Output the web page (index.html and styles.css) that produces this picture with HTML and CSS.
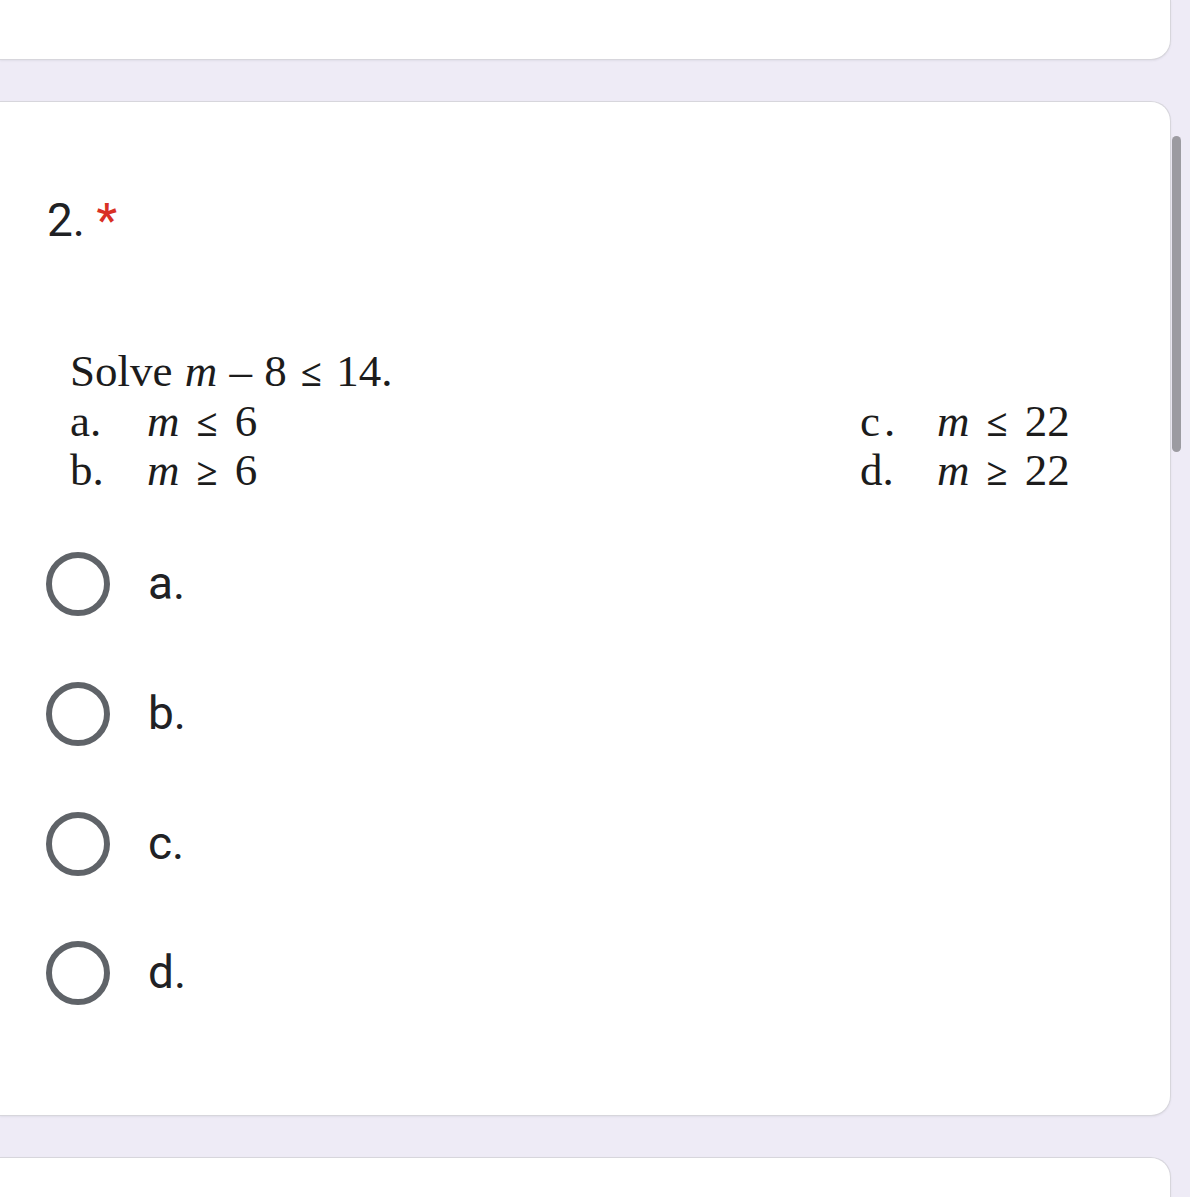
FILE: index.html
```html
<!DOCTYPE html>
<html lang="en">
<head>
<meta charset="utf-8">
<title>Question 2</title>
<link rel="stylesheet" href="styles.css">
</head>
<body>
<div class="page">
  <div class="card card-prev"></div>

  <div class="card card-question">
    <div class="q-title">2. <span class="req">*</span></div>

    <div class="q-image">
      <div class="q-stem">Solve <i>m</i> – 8 <span class="rel">≤</span> 14.</div>
      <div class="q-choices">
        <div class="ch"><span class="ch-l">a.</span><span class="ch-e"><i>m</i> <span class="rel">≤</span> 6</span></div>
        <div class="ch"><span class="ch-l ch-c">c.</span><span class="ch-e"><i>m</i> <span class="rel">≤</span> 22</span></div>
        <div class="ch"><span class="ch-l">b.</span><span class="ch-e"><i>m</i> <span class="rel">≥</span> 6</span></div>
        <div class="ch"><span class="ch-l">d.</span><span class="ch-e"><i>m</i> <span class="rel">≥</span> 22</span></div>
      </div>
    </div>

    <div class="options">
      <label class="opt"><span class="radio"></span><span class="opt-text">a.</span></label>
      <label class="opt"><span class="radio"></span><span class="opt-text">b.</span></label>
      <label class="opt"><span class="radio"></span><span class="opt-text">c.</span></label>
      <label class="opt"><span class="radio"></span><span class="opt-text">d.</span></label>
    </div>
  </div>

  <div class="card card-next"></div>
</div>
<div class="scrollbar"></div>
</body>
</html>
```

FILE: styles.css
```css
html, body {
  margin: 0;
  padding: 0;
  height: 100%;
  overflow: hidden;
}

body {
  background: #eeebf6;
  font-family: Roboto, "Liberation Sans", sans-serif;
  color: #202124;
}

.page {
  display: flex;
  flex-direction: column;
  gap: 41px;
  padding-right: 19px;
}

.card {
  background: #fff;
  border: 1px solid #d7d6dc;
  border-left: none;
  border-radius: 0 20px 20px 0;
  box-shadow: 0 1px 2px rgba(60, 60, 80, 0.08);
}

.card-prev {
  height: 59px;
  border-top: none;
  border-radius: 0 0 20px 0;
}

.card-question {
  padding: 90px 0 0 47px;
  box-sizing: content-box;
  height: 923px;
}

.card-next {
  height: 80px;
}

.q-title {
  font-size: 46px;
  line-height: 56px;
  color: #202124;
}

.req {
  color: #d93025;
  font-weight: 500;
}

.q-image {
  margin: 99px 0 0 23px;
  width: 1010px;
  height: 149px;
  font-family: "Liberation Serif", "Times New Roman", serif;
  font-size: 45px;
  line-height: 49.5px;
  color: #1c1c1c;
}

.q-image i {
  font-style: italic;
}

.q-stem {
  height: 49.5px;
  word-spacing: 1px;
}

.rel {
  font-size: 38px;
  line-height: 1;
  padding: 0 2px;
  font-weight: 700;
}

.q-choices {
  display: grid;
  grid-template-columns: 790px 1fr;
  grid-auto-rows: 49.5px;
}

.ch {
  display: flex;
  word-spacing: 4px;
}

.ch-l {
  width: 77px;
  flex: none;
}

.ch-c {
  letter-spacing: 4px;
}

.options {
  margin-top: 23px;
  display: flex;
  flex-direction: column;
}

.opt {
  height: 130px;
  display: flex;
  align-items: center;
  gap: 38px;
  margin-left: -1px;
}

.opt:nth-child(4) {
  height: 128px;
}

.radio {
  width: 52px;
  height: 52px;
  border: 6px solid #5f6368;
  border-radius: 50%;
  flex: none;
}

.opt-text {
  font-size: 46px;
  line-height: 56px;
  color: #202124;
  padding-bottom: 2px;
}

.scrollbar {
  position: fixed;
  left: 1172px;
  top: 136px;
  width: 9px;
  height: 316px;
  border-radius: 5px;
  background: #9c9ba1;
}
```
